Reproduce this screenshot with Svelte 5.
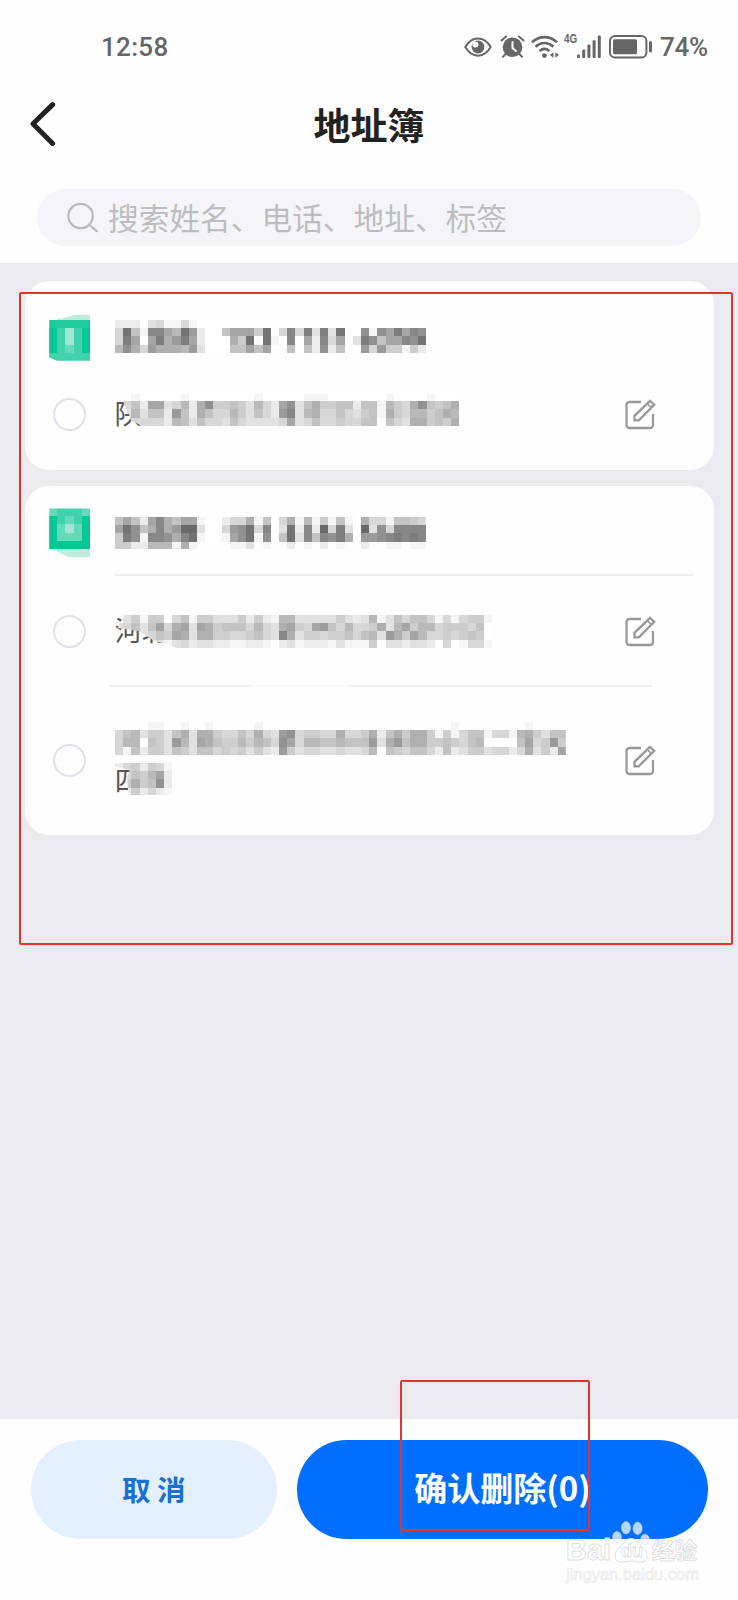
<script lang="ts">
  type Address = { glyph: string; top: number; clip: string; cells: string[] }
  type Contact = { id: string; avatar: string[]; avatarClip: string; name: string[]; addresses: Address[] }

  const CELL = 8.2

  // avatar cells: a is solid green, f nearly white
  const greens: Record<string, string> = {
    a: '#07c892', b: '#1dcb9a', c: '#40d2ab', d: '#65dabb', e: '#a2e6d3', f: '#bceddf', '.': '#ffffff',
  }

  // other cells are hex darkness levels, 0 is white
  const contacts: Contact[] = [
    {
      id: 'first',
      avatar: ['.ffff', 'bbbbb', 'aceca', 'aceca', 'acdca', 'ccccc'],
      avatarClip: 'polygon(0 8.2px, 13px 7px, 25px 3.5px, 41px 3.5px, 41px 49.2px, 8px 49.2px, 0 46px)',
      name: [
        '22203411410000000000000000000000000000',
        '4e61cc97ea20069995e04c4d3d3e00b1b9d9cb',
        '4d909d8ad9200085e0e10c092c4903db699cbe',
        '7b84a8887a300066969006062b2600a4a55152',
      ],
      addresses: [
        {
          glyph: '陕',
          top: 6,
          clip: 'polygon(8px 0, 100% 0, 100% 100%, 28px 100%, 16px 27px, 15px 23px, 9px 10px)',
          cells: [
            '001000001000000001000001110000000100001000',
            '04629934728b556537429b368556626617548b6568',
            '0373662a628644753642ac37844643561854775687',
            '024444276364436433334934644544660643885658',
          ],
        },
      ],
    },
    {
      id: 'second',
      avatar: ['dcccd', 'acdca', 'adeda', 'addda', 'aaaaa', '.ffff'],
      avatarClip: 'polygon(0 0, 41px 0, 41px 49.2px, 20px 49.2px, 8px 43px, 0 41px)',
      name: [
        '69629c86991002448160481715161084416654',
        '9eb68c8aff3004abe4c03e2c2f4d30f3b4cccc',
        '5db1ccb8ce10019be1b06e3c6cbd80aabcdcdc',
        '55227771810000113010020102010020011011',
      ],
      addresses: [
        {
          glyph: '河北',
          top: 1,
          clip: 'polygon(10px 0, 100% 0, 100% 100%, 62px 100%, 38px 25px, 24px 16px, 3px 13px, 5px 8px)',
          cells: [
            '0351550461553335252177333335323713646641414551',
            '3463694893985666474389549a64744583795774555460',
            '0443465983885544564 3c83554556467 3a8597445456 50'.replaceAll(' ', ''),
            '0000231342332211221023122213111503323320401441',
          ],
        },
        {
          glyph: '四',
          top: 44,
          clip: 'polygon(0 0, 100% 0, 100% 100%, 13.5px 100%, 12.5px 55px, 15px 49px, 0 45px)',
          cells: [
            '0000110010010000010000000000000000000000010000000010000',
            '46735536838854464843ab455448445826858851514661441785366',
            '4770653a739865575764b94776676 66a38a688556546700006945a5'.replace(' ', ''),
            '41625536536645453532a5344334334706546642623553442483529',
            '',
            '2452541',
            '0465792',
            '05856b2',
            '0252421',
          ],
        },
      ],
    },
  ]
</script>

{#snippet mosaic(rows: string[], clip = 'none')}
  {@const cols = Math.max(...rows.map((r) => r.length))}
  <svg
    class="mosaic"
    width={cols * CELL}
    height={rows.length * CELL}
    viewBox="0 0 {cols} {rows.length}"
    shape-rendering="crispEdges"
    style="clip-path: {clip}"
  >
    {#each rows as row, y}
      {#each row as ch, x}
        {@const g = 255 - parseInt(ch, 16) * 10}
        <rect {x} {y} width="1" height="1" fill="rgb({g},{g},{g})" />
      {/each}
    {/each}
  </svg>
{/snippet}

<div class="screen">
  <header>
    <div class="status">
      <span class="time">12:58</span>
      <div class="icons">
        <svg width="28" height="20" viewBox="0 0 28 20" fill="none" stroke="#666" stroke-width="2">
          <path d="M1.3 10C8-1.5 20-1.5 26.7 10C20 21.5 8 21.5 1.3 10Z" />
          <circle cx="14" cy="10" r="6.4" fill="#666" stroke="none" />
          <circle cx="11.4" cy="7.6" r="3" fill="#fff" stroke="none" />
        </svg>
        <svg class="alarm" width="25" height="23" viewBox="0 0 25 23" fill="none" stroke="#666" stroke-linecap="round">
          <circle cx="12.5" cy="12.2" r="9.8" fill="#666" stroke="none" />
          <path d="M1.5 5.5L6 1.5M23.5 5.5L19 1.5M5.5 19L3 21.8M19.5 19L22 21.8" stroke-width="2" />
          <path d="M12.5 7V13L16 16" stroke="#fff" stroke-width="2" />
        </svg>
        <svg class="wifi" width="28" height="24" viewBox="0 0 28 24" fill="none" stroke="#666" stroke-width="2.7">
          <path d="M1 7.4C8 .3 19 .3 26 7.4M4.6 11.8C10 6.7 17 6.7 22.4 11.8M8.6 16C12 13.1 15 13.1 18.4 16" />
          <circle cx="13.4" cy="20.6" r="2.4" fill="#666" stroke="none" />
          <path d="M22.4 17.2V22.8L18.8 20ZM24.4 17.2V22.8L28 20Z" fill="#666" stroke="none" />
        </svg>
        <span class="net">4G</span>
        <svg class="signal" width="24" height="24" viewBox="0 0 24 24" fill="#666">
          <rect x="0" y="19.5" width="3" height="3.5" rx="1" />
          <rect x="5.2" y="14.5" width="3" height="8.5" rx="1" />
          <rect x="10.4" y="9.6" width="3" height="13.4" rx="1" />
          <rect x="15.6" y="5.2" width="3" height="17.8" rx="1" />
          <rect x="20.8" y=".5" width="3" height="22.5" rx="1" />
        </svg>
        <svg class="battery" width="44" height="24" viewBox="0 0 44 24" fill="none">
          <rect x="1" y="1" width="36.4" height="21.4" rx="5" stroke="#666" stroke-width="2" />
          <rect x="4" y="4.2" width="24" height="15" rx="1.5" fill="#666" />
          <rect x="40" y="6" width="3" height="11.5" rx="1.5" fill="#666" />
        </svg>
        <span class="percent">74%</span>
      </div>
    </div>

    <div class="titlebar">
      <svg class="back" width="26" height="46" viewBox="0 0 26 46" fill="none" stroke="#222" stroke-width="5" stroke-linecap="round" stroke-linejoin="round">
        <path d="M22.6 3.6L3 22.8L22.6 42.4" />
      </svg>
      <h1>地址簿</h1>
    </div>

    <div class="search">
      <svg width="32" height="32" viewBox="0 0 32 32" fill="none" stroke="#b8b8bd" stroke-width="2.2" stroke-linecap="round">
        <circle cx="13.6" cy="14" r="12.2" />
        <path d="M22.5 23L29.8 29.2" />
      </svg>
      <span>搜索姓名、电话、地址、标签</span>
    </div>
  </header>

  <main>
    {#each contacts as contact (contact.id)}
      <section class="card {contact.id}">
        <div class="person">
          <svg class="avatar" width="41" height="49.2" viewBox="0 0 5 6" shape-rendering="crispEdges" style="clip-path: {contact.avatarClip}">
            {#each contact.avatar as row, y}
              {#each row as ch, x}
                <rect {x} {y} width="1" height="1" fill={greens[ch]} />
              {/each}
            {/each}
          </svg>
          <div class="name">{@render mosaic(contact.name)}</div>
        </div>
        {#each contact.addresses as address}
          <div class="address">
            <span class="radio"></span>
            <div class="text">
              <span class="glyph" style="top: {address.top}px">{address.glyph}</span>
              {@render mosaic(address.cells, address.clip)}
            </div>
            <svg class="edit" width="31" height="31" viewBox="0 0 31 31" fill="none" stroke="#999" stroke-width="2.3" stroke-linejoin="round">
              <path d="M16 3H4.5A3 3 0 0 0 1.5 6V26A3 3 0 0 0 4.5 29H25A3 3 0 0 0 28 26V15" stroke-linecap="butt" />
              <path d="M9.5 21.3V16.8L25 1.8L29.2 5.8L13.8 21.3Z" stroke-linejoin="miter" />
              <path d="M22.3 4.6L26.4 8.6" stroke-width="1.6" />
            </svg>
          </div>
        {/each}
      </section>
    {/each}
  </main>

  <footer>
    <button class="cancel">取 消</button>
    <button class="confirm">确认删除(0)</button>
  </footer>

  <div class="mark list"></div>
  <div class="mark action"></div>

  <div class="watermark">
    <div class="brand">
      <span class="latin">Bai</span>
      <span class="paw">
        <svg width="38" height="42" viewBox="0 0 38 42">
          <g fill="#fff" fill-opacity=".72" stroke="#d8d8dc" stroke-opacity=".6" stroke-width=".8">
            <ellipse cx="5" cy="16" rx="4.4" ry="5.6" />
            <ellipse cx="14" cy="6.8" rx="4.6" ry="6.2" />
            <ellipse cx="25.6" cy="7.4" rx="4.6" ry="6.2" />
            <ellipse cx="33" cy="18.4" rx="4.4" ry="5.2" />
          </g>
          <path d="M19 17.5C13 17.5 11 24 7 27C2 31 1 39 7.5 41C12 42 15 40 19 40S27 42 31 41C37 39 36 31 31 27C27 24 25 17.5 19 17.5Z" fill="#fff" stroke="#dedee0" />
        </svg>
        <i>du</i>
      </span>
      <span class="cn">经验</span>
    </div>
    <div class="url">jingyan.baidu.com</div>
  </div>
</div>

<style>
  :global(body) { margin: 0; }
  .screen {
    position: relative;
    display: flex;
    flex-direction: column;
    width: 738px;
    height: 1600px;
    overflow: hidden;
    background: #ebebef;
    font-family: "Noto Sans CJK SC", sans-serif;
  }
  svg { display: block; flex: none; }

  header {
    box-sizing: border-box;
    height: 263px;
    padding-top: 28px;
    background: #fefefe;
  }
  .status {
    display: flex;
    justify-content: space-between;
    align-items: center;
    height: 37px;
    padding: 0 30px 0 101px;
    font-family: Roboto, sans-serif;
    font-weight: 500;
    color: #666;
  }
  .time { font-size: 26px; letter-spacing: 0.3px; }
  .icons { display: flex; align-items: center; }
  .alarm { margin-left: 8px; }
  .wifi { margin-left: 6px; }
  .net { margin: -15px 0 0 5px; width: 13px; font: 700 13px/12px "Liberation Sans", sans-serif; transform: scaleX(0.76); transform-origin: left; }
  .battery { margin-left: 8px; }
  .percent { margin-left: 7px; font-size: 26px; letter-spacing: -0.2px; }

  .titlebar {
    position: relative;
    display: flex;
    align-items: center;
    justify-content: center;
    height: 119px;
  }
  .back { position: absolute; left: 30px; top: 36px; }
  h1 { margin: 0 0 1px; font-size: 37px; line-height: 48px; font-weight: 700; color: #222; }
  .search {
    display: flex;
    align-items: center;
    gap: 9px;
    box-sizing: border-box;
    height: 57px;
    margin: 5px 37px 0;
    padding-left: 30px;
    border-radius: 29px;
    background: #f5f5f9;
    color: #bdbdc1;
    font-size: 30.7px;
    font-weight: 400;
    line-height: 55px;
  }
  .search span { margin-top: -2px; }

  main {
    display: flex;
    flex: 1;
    flex-direction: column;
    gap: 16px;
    padding: 18px 24.5px 0 25px;
  }
  .card {
    display: flex;
    flex-direction: column;
    box-sizing: border-box;
    border-radius: 24px;
    background: #fefefe;
  }
  .card.first { height: 189px; padding-top: 30.6px; }
  .card.second { height: 349px; padding-top: 22.4px; }
  .person { display: flex; gap: 24.6px; padding-left: 24.2px; }
  .name { padding-top: 8.2px; }
  .second .person {
    height: 67.6px;
    background: linear-gradient(#eee, #eee) 90px 100% / 578px 2px no-repeat;
  }
  .address {
    display: flex;
    align-items: center;
    box-sizing: border-box;
    height: 107px;
    padding: 0 58px 0 28px;
  }
  .second .address { height: 109px; padding-top: 2px; }
  .second .address:last-child {
    height: 150px;
    background:
      linear-gradient(90deg, #eee 137px, #fbfbfb 145px, #fbfbfb 237px, #eee 245px) 84px 0 / 543px 2px no-repeat;
  }
  .radio {
    box-sizing: border-box;
    width: 33px;
    height: 33px;
    border: 2px solid #dfe1ec;
    border-radius: 50%;
  }
  .text { position: relative; flex: 1; margin-left: 28.8px; }
  .first .text { margin-top: -9px; }
  .second .address:last-child .text { margin-top: -5px; }
  .mosaic { position: relative; }
  .glyph {
    position: absolute;
    left: 0;
    font-size: 27px;
    line-height: 28px;
    color: #555;
  }

  footer {
    display: flex;
    gap: 20px;
    box-sizing: border-box;
    height: 181px;
    padding: 21px 30.5px 0 31px;
    background: #fefefe;
  }
  button {
    height: 99px;
    padding: 0 0 3px;
    border: 0;
    border-radius: 50px;
    font-family: inherit;
    font-weight: 700;
  }
  .cancel { width: 245.5px; background: #e4f0ff; color: #1670d6; font-size: 28.5px; }
  .confirm { flex: 1; padding: 0 0 5px 1px; background: #006fff; color: #fff; font-size: 33px; }

  .mark { position: absolute; box-sizing: border-box; border: 2px solid #e5332c; border-radius: 2px; }
  .mark.list { left: 19px; top: 292px; width: 714px; height: 653px; }
  .mark.action { left: 400px; top: 1380px; width: 190px; height: 151px; }

  .watermark { position: absolute; left: 566px; top: 1521px; color: #fff; }
  .brand { display: flex; align-items: flex-end; height: 42px; }
  .latin { width: 46px; font: 700 29px/26px "Liberation Sans", sans-serif; -webkit-text-stroke: 0.9px #e0e0e2; }
  .paw { position: relative; }
  .paw i {
    position: absolute;
    left: 9px;
    bottom: 0;
    font: 700 18px/24px "Liberation Sans", sans-serif;
    -webkit-text-stroke: 0.8px #e0e0e2;
  }
  .cn { margin-left: 2px; font-size: 22.5px; font-weight: 700; line-height: 28px; -webkit-text-stroke: 0.9px #e0e0e2; }
  .url { margin-top: 1px; font: 16.5px/20px "Liberation Sans", sans-serif; -webkit-text-stroke: 0.7px #e9e9eb; }
</style>
